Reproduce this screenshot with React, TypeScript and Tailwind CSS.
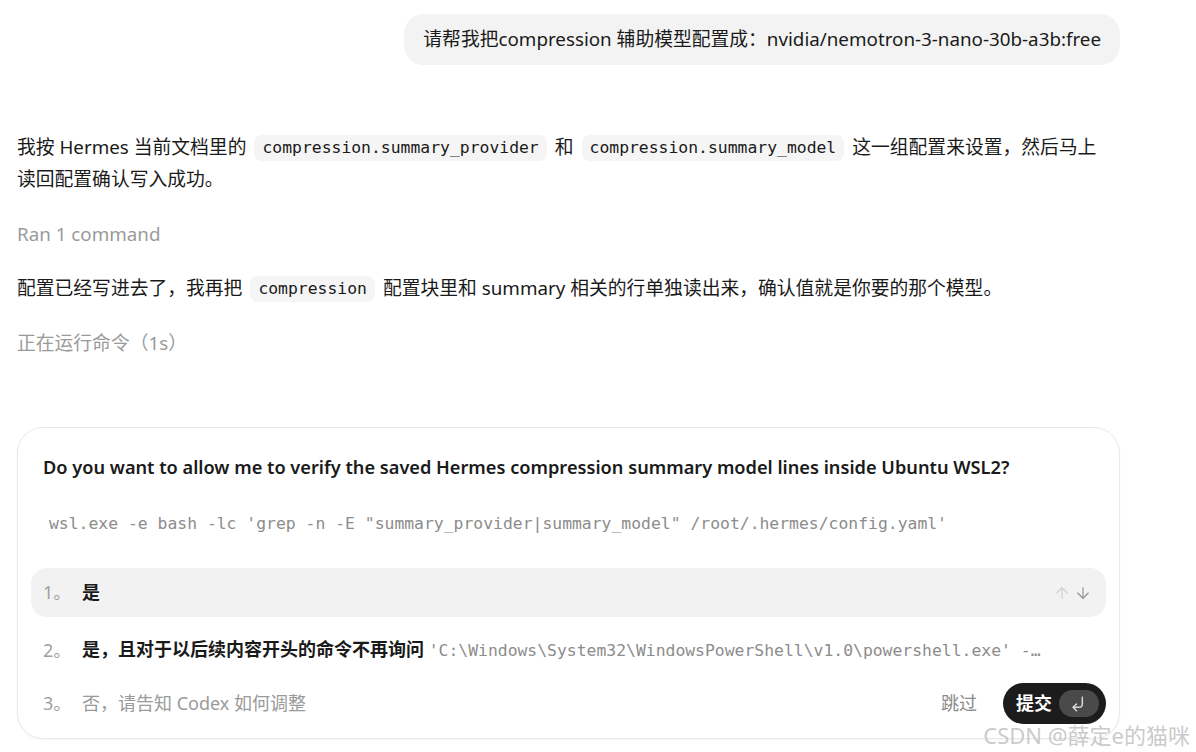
import { ArrowDown, ArrowUp } from "lucide-react";

const sans = `font-["Segoe_UI","Noto_Sans","Noto_Sans_CJK_SC",sans-serif]`;
const mono = `font-["DejaVu_Sans_Mono","Noto_Sans_CJK_SC",monospace]`;

const Code = ({ children }: { children: string }) => (
  <code className={`${mono} mx-2 inline-block rounded-lg bg-[#f5f5f5] px-2 align-[1px] text-[16.4px] leading-[26px] text-[#1a1a1a]`}>
    {children}
  </code>
);

const EnterIcon = () => (
  <svg width="20" height="20" viewBox="0 0 24 24" fill="none" stroke="currentColor" strokeWidth="1.8" strokeLinecap="round" strokeLinejoin="round">
    <path d="M16 4v8a4 4 0 0 1-4 4H5" />
    <path d="M9 12l-4 4 4 4" />
  </svg>
);

const App = () => {
  return (
    <div className={`${sans} relative h-[752px] w-[1196px] overflow-hidden bg-white text-[#1a1a1a]`}>
      <div className="flex w-[1120px] flex-col pl-[17px] pt-[14px]">
        <div className="flex justify-end">
          <div className="flex h-[51px] items-center rounded-[20px] bg-[#f3f3f3] px-[19px] text-[18.8px]">
            请帮我把compression 辅助模型配置成：nvidia/nemotron-3-nano-30b-a3b:free
          </div>
        </div>

        <p className="mt-[66px] pr-[10px] text-[18.8px] leading-[32px]">
          我按 Hermes 当前文档里的<Code>compression.summary_provider</Code>和<Code>compression.summary_model</Code>这一组配置来设置，然后马上读回配置确认写入成功。
        </p>

        <p className="mt-[23px] text-[18.8px] leading-[32px] text-[#9a9a9a]">Ran 1 command</p>

        <p className="mt-[22px] pr-[10px] text-[18.8px] leading-[32px]">
          配置已经写进去了，我再把<Code>compression</Code>配置块里和 summary 相关的行单独读出来，确认值就是你要的那个模型。
        </p>

        <p className="mt-[23px] text-[18.8px] leading-[32px] text-[#9a9a9a]">正在运行命令（1s）</p>

        <div className="mt-[68px] flex flex-col rounded-[26px] border border-[#e8e8e8] px-[13px] pb-[14px] pt-[25px] shadow-[0_1px_2px_rgba(0,0,0,0.04)]">
          <h2 className="px-3 text-[18.2px] font-semibold leading-[28px]">
            Do you want to allow me to verify the saved Hermes compression summary model lines inside Ubuntu WSL2?
          </h2>
          <div className={`${mono} mt-[31px] px-[18px] text-[16.4px] leading-[24px] text-[#8c8c8c]`}>
            wsl.exe -e bash -lc 'grep -n -E "summary_provider|summary_model" /root/.hermes/config.yaml'
          </div>

          <div className="mt-[32px] flex flex-col gap-2">
            <div className="flex h-[49px] items-center rounded-[16px] bg-[#f2f2f2] pl-3 pr-[14px]">
              <span className="w-[39px] text-[18px] text-[#a0a0a0]">1。</span>
              <span className="flex-1 text-[18px] font-bold">是</span>
              <span className="flex items-center gap-[3px]">
                <ArrowUp size={18} strokeWidth={1.5} className="text-[#cfcfcf]" />
                <ArrowDown size={18} strokeWidth={1.5} className="text-[#8f8f8f]" />
              </span>
            </div>
            <div className="flex h-[50px] items-center pl-3 pr-[14px]">
              <span className="w-[39px] shrink-0 text-[18px] text-[#a0a0a0]">2。</span>
              <span className="truncate text-[18px]">
                <span className="font-bold">是，且对于以后续内容开头的命令不再询问</span>{" "}
                <span className={`${mono} text-[16.4px] text-[#8c8c8c]`}>
                  'C:\Windows\System32\WindowsPowerShell\v1.0\powershell.exe' -…
                </span>
              </span>
            </div>
            <div className="flex h-[41px] items-center pl-3">
              <span className="w-[39px] text-[18px] text-[#a0a0a0]">3。</span>
              <span className="flex-1 text-[18px] text-[#9a9a9a]">否，请告知 Codex 如何调整</span>
              <span className="mr-[26px] text-[18px] text-[#8a8a8a]">跳过</span>
              <button className="flex h-[41px] items-center gap-[7px] rounded-full bg-[#1c1c1c] pl-[13px] pr-[7px] text-[18px] font-bold text-white">
                提交
                <span className="flex h-[27px] w-[40px] items-center justify-center rounded-full bg-[#4a4a4a] text-[#d8d8d8]">
                  <EnterIcon />
                </span>
              </button>
            </div>
          </div>
        </div>
      </div>

      <div className="absolute bottom-[6px] right-[6px] text-[22px] leading-none text-[#c4c4c4]/90">
        CSDN @薛定e的猫咪
      </div>
    </div>
  );
};

export default App;
